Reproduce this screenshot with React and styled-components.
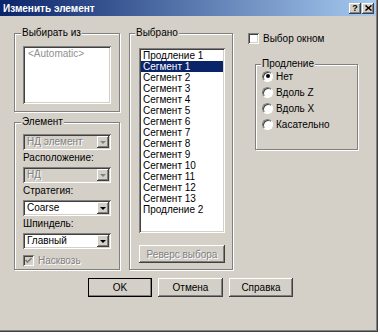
import React from "react";
import styled, { createGlobalStyle } from "styled-components";

const GlobalStyle = createGlobalStyle`
  html, body {
    margin: 0;
    padding: 0;
    background: #fff;
  }
  body {
    font-family: "Liberation Sans", Arial, sans-serif;
    font-size: 10px;
    color: #000;
  }
`;

const raised = `
  box-shadow: inset -1px -1px 0 #404040, inset 1px 1px 0 #fff,
    inset -2px -2px 0 #808080, inset 2px 2px 0 #d4d0c8;
`;

const sunken = `
  box-shadow: inset 1px 1px 0 #808080, inset -1px -1px 0 #fff,
    inset 2px 2px 0 #404040, inset -2px -2px 0 #d4d0c8;
`;

const disabledText = `
  color: #808080;
  text-shadow: 1px 1px 0 #fff;
`;

const Window = styled.div`
  width: 378px;
  height: 332px;
  box-sizing: border-box;
  background: #d4d0c8;
  box-shadow: inset -1px -1px 0 #404040, inset -2px -2px 0 #808080;
  display: flex;
  flex-direction: column;
`;

const TitleBar = styled.div`
  height: 16px;
  margin-right: 2px;
  padding: 0 2px 0 3px;
  display: flex;
  align-items: center;
  justify-content: space-between;
  background: linear-gradient(to right, #0a246a, #a6caf0);
  color: #fff;
  font-weight: bold;
  font-size: 10px;
`;

const TitleButtons = styled.div`
  display: flex;
  gap: 1px;
`;

const TitleButton = styled.div`
  width: 12px;
  height: 11px;
  background: #d4d0c8;
  ${raised}
  display: flex;
  align-items: center;
  justify-content: center;
  color: #000;
  font-size: 9px;
  font-weight: bold;
  line-height: 1;
`;

const Body = styled.div`
  padding: 11px 0 0 14px;
  display: flex;
  flex-direction: column;
`;

const Columns = styled.div`
  display: flex;
  align-items: flex-start;
`;

const Column = styled.div`
  width: ${(p) => p.$width}px;
  margin-right: ${(p) => p.$gap || 0}px;
  display: flex;
  flex-direction: column;
`;

const Group = styled.div`
  border: 1px solid #808080;
  box-shadow: inset 1px 1px 0 #fff, 1px 1px 0 #fff;
  margin-top: ${(p) => p.$top}px;
  margin-left: ${(p) => p.$left || 0}px;
  width: ${(p) => (p.$width ? `${p.$width}px` : "auto")};
  box-sizing: border-box;
  padding: 0 ${(p) => p.$padR || 0}px ${(p) => p.$padB}px
    ${(p) => p.$padL || 0}px;
  display: flex;
  flex-direction: column;
  align-items: flex-start;
`;

const Legend = styled.div`
  margin: -7px 0 0 ${(p) => p.$left}px;
  padding: 0 1px;
  background: #d4d0c8;
  line-height: 12px;
  white-space: nowrap;
`;

const ListBox = styled.div`
  width: ${(p) => p.$width}px;
  height: ${(p) => p.$height}px;
  margin-top: ${(p) => p.$top}px;
  box-sizing: border-box;
  padding: 2px;
  background: #fff;
  ${sunken}
`;

const ListItem = styled.div`
  height: 11px;
  line-height: 11px;
  padding-left: ${(p) => (p.$muted ? 3 : 2)}px;
  white-space: nowrap;
  background: ${(p) => (p.$selected ? "#0a246a" : "transparent")};
  color: ${(p) => (p.$selected ? "#fff" : p.$muted ? "#909090" : "#000")};
`;

const FieldLabel = styled.div`
  line-height: 12px;
  margin-top: ${(p) => p.$top}px;
  white-space: nowrap;
`;

const Combo = styled.div`
  width: 88px;
  height: 16px;
  margin-top: ${(p) => p.$top}px;
  box-sizing: border-box;
  padding: 2px;
  display: flex;
  align-items: stretch;
  background: ${(p) => (p.$disabled ? "#d4d0c8" : "#fff")};
  ${sunken}
`;

const ComboText = styled.div`
  flex: 1;
  padding-left: 2px;
  line-height: 12px;
  white-space: nowrap;
  ${(p) => (p.$disabled ? disabledText : "")}
`;

const ComboArrow = styled.div`
  width: 12px;
  background: #d4d0c8;
  ${raised}
  display: flex;
  align-items: center;
  justify-content: center;

  &::after {
    content: "";
    border-left: 3px solid transparent;
    border-right: 3px solid transparent;
    border-top: 3px solid ${(p) => (p.$disabled ? "#808080" : "#000")};
  }
`;

const CheckRow = styled.div`
  display: flex;
  align-items: center;
  height: 12px;
  margin-top: ${(p) => p.$top}px;
  margin-left: ${(p) => p.$left || 0}px;
  white-space: nowrap;
  ${(p) => (p.$disabled ? disabledText : "")}
`;

const CheckBox = styled.span`
  width: 11px;
  height: 11px;
  margin-right: 4px;
  box-sizing: border-box;
  background: ${(p) => (p.$disabled ? "#d4d0c8" : "#fff")};
  ${sunken}
  display: flex;
  align-items: center;
  justify-content: center;
  text-shadow: none;
`;

const RadioList = styled.div`
  display: flex;
  flex-direction: column;
  gap: 4px;
  margin-left: 6px;
`;

const RadioRow = styled.div`
  display: flex;
  align-items: center;
  height: 12px;
  white-space: nowrap;
`;

const Radio = styled.span`
  width: 11px;
  height: 11px;
  margin-right: 3px;
  box-sizing: border-box;
  border-radius: 50%;
  border: 1px solid;
  border-color: #808080 #fff #fff #808080;
  background: #fff;
  box-shadow: inset 1px 1px 0 #404040;
  display: flex;
  align-items: center;
  justify-content: center;

  &::after {
    content: "";
    width: 4px;
    height: 4px;
    border-radius: 50%;
    background: ${(p) => (p.$checked ? "#000" : "transparent")};
  }
`;

const Button = styled.div`
  width: ${(p) => p.$width || 64}px;
  height: ${(p) => p.$height || 19}px;
  margin-top: ${(p) => p.$top || 0}px;
  margin-left: ${(p) => p.$left || 0}px;
  box-sizing: border-box;
  background: #d4d0c8;
  ${raised}
  ${(p) => (p.$default ? "outline: 1px solid #000; outline-offset: -1px;" : "")}
  display: flex;
  align-items: center;
  justify-content: center;
  white-space: nowrap;
  ${(p) => (p.$disabled ? disabledText : "")}
`;

const ButtonRow = styled.div`
  display: flex;
  gap: 6px;
  margin-top: 8px;
  padding-left: 74px;
`;

const Check = ({ color }) => (
  <svg width="7" height="7" viewBox="0 0 7 7">
    <path d="M0.5 3 L2.5 5 L6.5 1" fill="none" stroke={color} strokeWidth="1.6" />
  </svg>
);

const selected = [
  "Продление 1",
  ...Array.from({ length: 13 }, (_, i) => `Сегмент ${i + 1}`),
  "Продление 2",
];

export default function App() {
  return (
    <>
      <GlobalStyle />
      <Window>
        <TitleBar>
          <span>Изменить элемент</span>
          <TitleButtons>
            <TitleButton>?</TitleButton>
            <TitleButton>
              <svg width="7" height="6" viewBox="0 0 7 6">
                <path d="M0.5 0.5 L6.5 5.5 M6.5 0.5 L0.5 5.5" stroke="#000" strokeWidth="1.5" />
              </svg>
            </TitleButton>
          </TitleButtons>
        </TitleBar>
        <Body>
          <Columns>
            <Column $width={106} $gap={9}>
              <Group $top={6} $padB={7} $padL={8}>
                <Legend $left={-2}>Выбирать из</Legend>
                <ListBox $width={88} $height={58} $top={7}>
                  <ListItem $muted>&lt;Automatic&gt;</ListItem>
                </ListBox>
              </Group>
              <Group $top={10} $padB={3} $padL={8}>
                <Legend $left={-2}>Элемент</Legend>
                <Combo $top={6} $disabled>
                  <ComboText $disabled>НД элемент</ComboText>
                  <ComboArrow $disabled />
                </Combo>
                <FieldLabel $top={2}>Расположение:</FieldLabel>
                <Combo $top={3} $disabled>
                  <ComboText $disabled>НД</ComboText>
                  <ComboArrow $disabled />
                </Combo>
                <FieldLabel $top={2}>Стратегия:</FieldLabel>
                <Combo $top={3}>
                  <ComboText>Coarse</ComboText>
                  <ComboArrow />
                </Combo>
                <FieldLabel $top={2}>Шпиндель:</FieldLabel>
                <Combo $top={3}>
                  <ComboText>Главный</ComboText>
                  <ComboArrow />
                </Combo>
                <CheckRow $top={5} $disabled>
                  <CheckBox $disabled>
                    <Check color="#808080" />
                  </CheckBox>
                  Насквозь
                </CheckRow>
              </Group>
            </Column>
            <Column $width={104} $gap={15}>
              <Group $top={6} $padB={6} $padL={9}>
                <Legend $left={-4}>Выбрано</Legend>
                <ListBox $width={86} $height={185} $top={9}>
                  {selected.map((s) => (
                    <ListItem key={s} $selected={s === "Сегмент 1"}>
                      {s}
                    </ListItem>
                  ))}
                </ListBox>
                <Button $width={86} $height={18} $top={12} $disabled>
                  Реверс выбора
                </Button>
              </Group>
            </Column>
            <Column $width={111}>
              <CheckRow $top={5}>
                <CheckBox />
                Выбор окном
              </CheckRow>
              <Group $top={20} $left={7} $width={103} $padB={19}>
                <Legend $left={5}>Продление</Legend>
                <RadioList>
                  <RadioRow>
                    <Radio $checked />
                    Нет
                  </RadioRow>
                  <RadioRow>
                    <Radio />
                    Вдоль Z
                  </RadioRow>
                  <RadioRow>
                    <Radio />
                    Вдоль X
                  </RadioRow>
                  <RadioRow>
                    <Radio />
                    Касательно
                  </RadioRow>
                </RadioList>
              </Group>
            </Column>
          </Columns>
          <ButtonRow>
            <Button $default>OK</Button>
            <Button $width={65}>Отмена</Button>
            <Button>Справка</Button>
          </ButtonRow>
        </Body>
      </Window>
    </>
  );
}
